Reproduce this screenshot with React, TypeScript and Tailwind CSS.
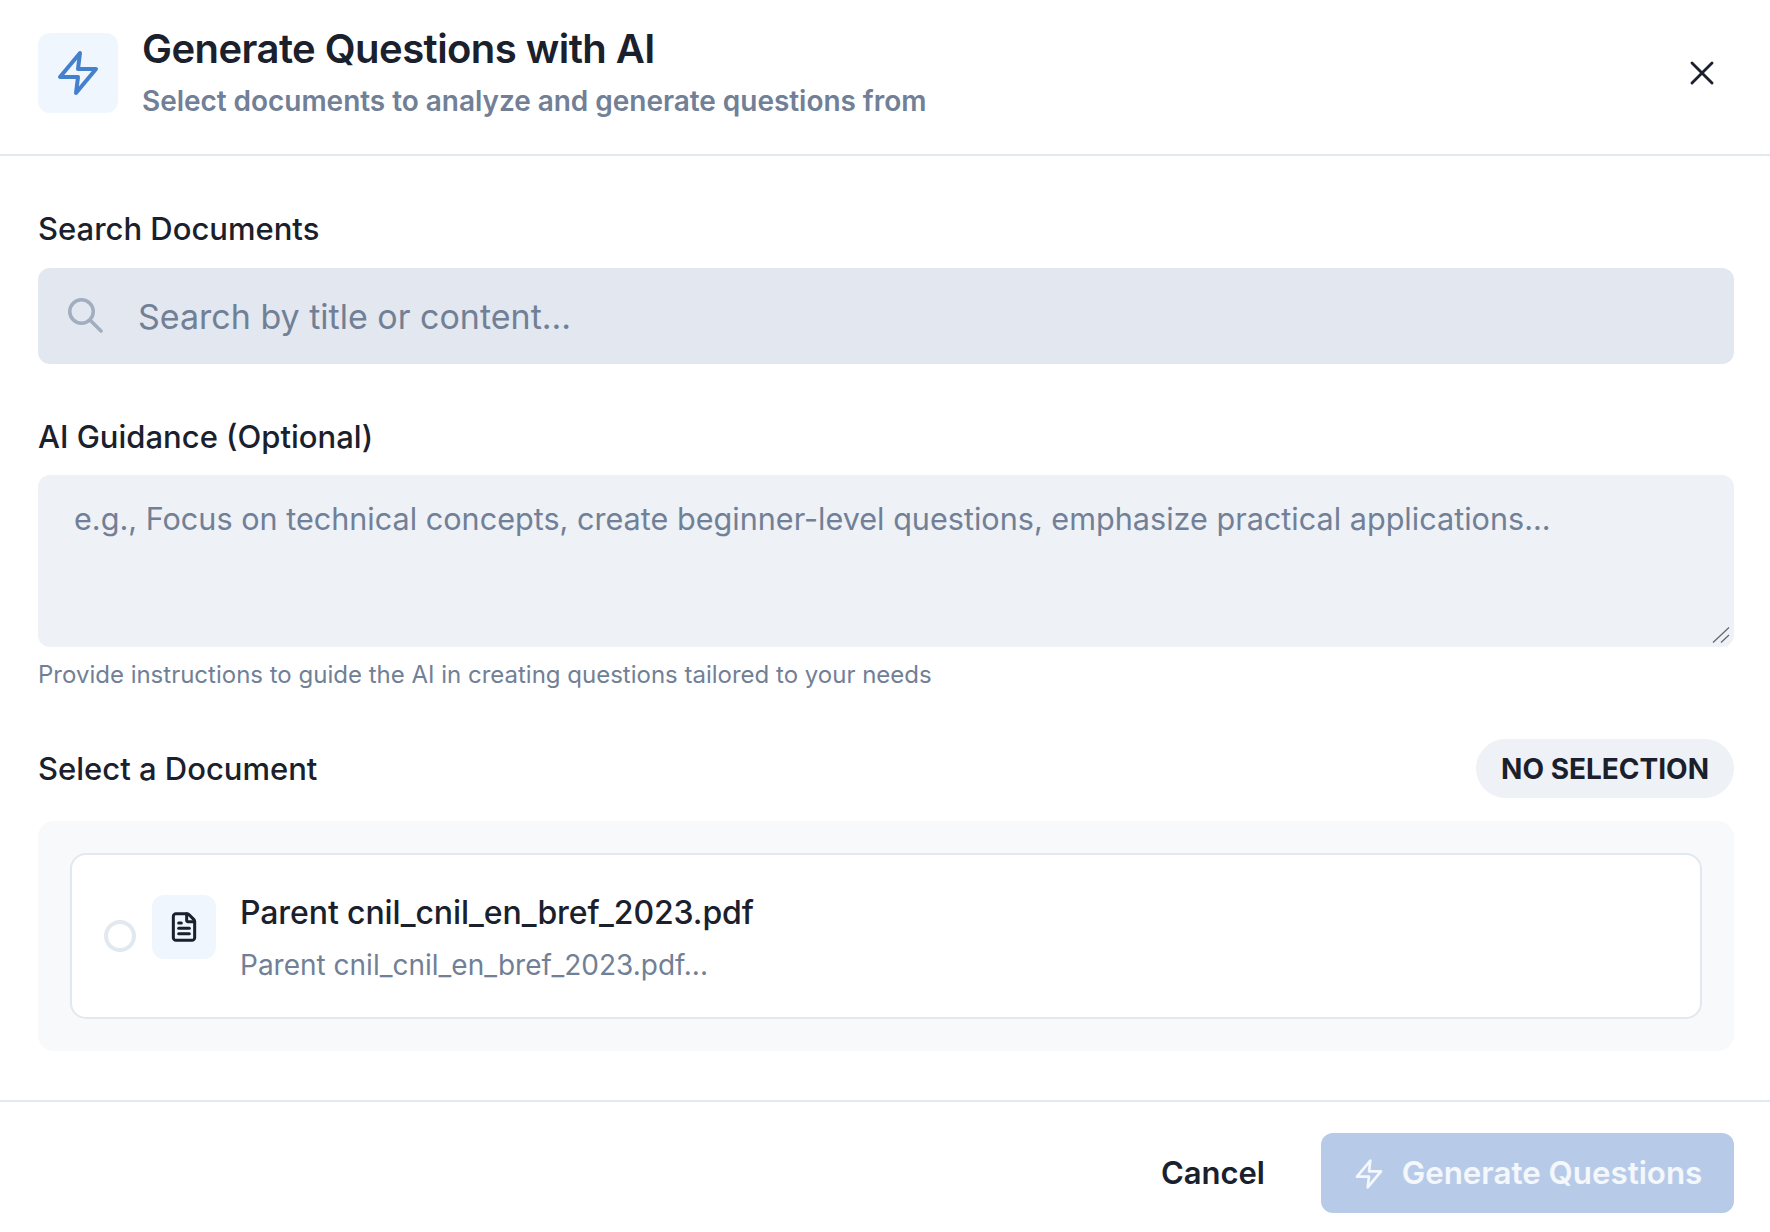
import { FileText, X } from 'lucide-react';

function Bolt({ size, className }: { size: number; className?: string }) {
  return (
    <svg width={size} height={size} viewBox="0 0 24 24" fill="none" stroke="currentColor" strokeWidth={2} strokeLinecap="round" strokeLinejoin="round" className={className}>
      <polygon points="13 2 3 14 12 14 11 22 21 10 12 10 13 2" />
    </svg>
  );
}

export default function App() {
  return (
    <div className="flex h-[1232px] w-[1770px] flex-col overflow-hidden bg-white font-['Inter',sans-serif] text-[#1a202c]">
      <header className="flex h-[156px] shrink-0 items-start justify-between border-b-2 border-[#e2e8f0] pl-[38px] pr-[38px] pt-[33px]">
        <div className="flex gap-[24px]">
          <div className="flex h-[80px] w-[80px] items-center justify-center rounded-[12px] bg-[#eff6fd]">
            <Bolt size={48} className="text-[#4480cc]" />
          </div>
          <div className="-mt-[13px]">
            <h1 className="text-[40px] font-semibold leading-[58px] tracking-[-0.55px]">Generate Questions with AI</h1>
            <p className="mt-[1px] text-[28px] font-semibold leading-[44px] tracking-[-0.04px] text-[#718096]">
              Select documents to analyze and generate questions from
            </p>
          </div>
        </div>
        <button className="mr-[2px] mt-[12px] flex h-[56px] w-[56px] items-center justify-center">
          <X size={40} strokeWidth={1.75} />
        </button>
      </header>

      <main className="flex-1 pl-[38px] pr-[36px] pt-[51px]">
        <label className="block text-[31px] font-medium leading-[44px]">Search Documents</label>
        <div className="relative mt-[17px]">
          <svg width={35} height={35} viewBox="0 0 35 35" fill="none" stroke="currentColor" strokeWidth={3.5} strokeLinecap="round" className="absolute left-[30px] top-[30px] text-[#a0aec0]">
            <circle cx="13.5" cy="13.5" r="11.75" />
            <path d="M22.5 22.5 33 33" />
          </svg>
          <input
            placeholder="Search by title or content..."
            className="block h-[96px] w-full rounded-[12px] bg-[#e3e7ef] pl-[100px] pr-[32px] text-[34px] outline-none placeholder:text-[#718096]"
          />
        </div>

        <label className="mt-[51px] block text-[31px] font-medium leading-[44px]">AI Guidance (Optional)</label>
        <div className="relative mt-[16px]">
          <textarea
            placeholder="e.g., Focus on technical concepts, create beginner-level questions, emphasize practical applications..."
            className="block h-[172px] w-full resize-none rounded-[12px] bg-[#eef1f6] px-[36px] py-[20px] text-[30.6px] leading-[48px] outline-none placeholder:text-[#718096]"
          />
          <svg width={18} height={16} viewBox="0 0 18 16" fill="none" stroke="#5f6570" strokeWidth={1.2} className="absolute bottom-[4px] right-[4px]">
            <path d="M1 15.5 17 0.5M9 15.5 17 8" />
          </svg>
        </div>
        <p className="mt-[10px] text-[24px] leading-[36px] text-[#718096]">
          Provide instructions to guide the AI in creating questions tailored to your needs
        </p>

        <div className="mt-[46px] flex items-center justify-between">
          <h2 className="text-[31px] font-medium leading-[44px]">Select a Document</h2>
          <span className="flex h-[59px] items-center rounded-full bg-[#eef1f6] px-[25px] text-[28px] font-bold">
            NO SELECTION
          </span>
        </div>

        <div className="mt-[23px] rounded-[16px] bg-[#f8f9fb] p-[32px]">
          <div className="flex h-[166px] items-center rounded-[16px] border-2 border-[#e2e8f0] bg-white px-[32px]">
            <span className="h-[32px] w-[32px] shrink-0 rounded-full border-[4px] border-[#e2e8f0]" />
            <div className="-mt-[18px] ml-[16px] flex h-[64px] w-[64px] shrink-0 items-center justify-center rounded-[12px] bg-[#eff6fd]">
              <FileText size={32} strokeWidth={2.25} />
            </div>
            <div className="ml-[24px] mt-[3px]">
              <p className="text-[32px] font-medium leading-[48px] tracking-[-0.1px]">Parent cnil_cnil_en_bref_2023.pdf</p>
              <p className="mt-[6px] text-[28px] leading-[44px] text-[#718096]">Parent cnil_cnil_en_bref_2023.pdf...</p>
            </div>
          </div>
        </div>
      </main>

      <footer className="flex h-[132px] shrink-0 justify-end gap-[24px] border-t-2 border-[#e2e8f0] px-[36px] pt-[31px]">
        <button className="flex h-[80px] items-center px-[32px] pt-[1px] text-[31px] font-semibold">Cancel</button>
        <button className="flex h-[80px] w-[413px] items-center justify-center gap-[17px] rounded-[12px] bg-[#b7cbe8] pt-[1px] text-[31.3px] font-semibold text-white/85">
          <Bolt size={32} />
          Generate Questions
        </button>
      </footer>
    </div>
  );
}
